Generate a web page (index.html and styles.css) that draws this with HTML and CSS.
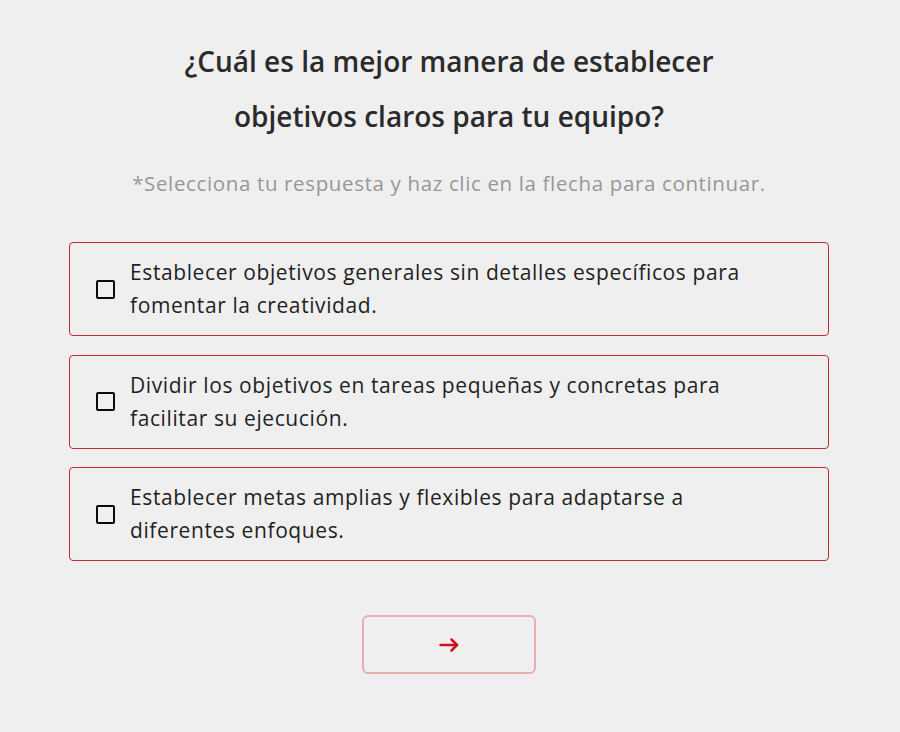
FILE: index.html
```html
<!DOCTYPE html>
<html lang="es">
<head>
<meta charset="utf-8">
<link rel="stylesheet" href="styles.css">
</head>
<body>
<main class="quiz">
  <h1 class="question">¿Cuál es la mejor manera de establecer<br>objetivos claros para tu equipo?</h1>
  <p class="hint">*Selecciona tu respuesta y haz clic en la flecha para continuar.</p>
  <div class="options">
    <label class="option"><span class="box"></span><span class="text">Establecer objetivos generales sin detalles específicos para fomentar la creatividad.</span></label>
    <label class="option"><span class="box"></span><span class="text">Dividir los objetivos en tareas pequeñas y concretas para facilitar su ejecución.</span></label>
    <label class="option"><span class="box"></span><span class="text">Establecer metas amplias y flexibles para adaptarse a diferentes enfoques.</span></label>
  </div>
  <div class="actions">
    <button class="next" type="button" aria-label="Continuar">
      <svg class="arrow" width="20" height="14" viewBox="0 0 20 14" fill="none" stroke="currentColor" stroke-width="2.5" stroke-linecap="round" stroke-linejoin="round">
        <path d="M1.5 7H18"/>
        <path d="M12.5 1.5L18 7L12.5 12.5"/>
      </svg>
    </button>
  </div>
</main>
</body>
</html>
```
FILE: styles.css
```css
* { box-sizing: border-box; }
html, body { margin: 0; padding: 0; }
body {
  background: #efefef;
  font-family: "Open Sans", "Noto Sans", sans-serif;
  color: #222;
  width: 900px;
  height: 732px;
  overflow: hidden;
}
.quiz {
  width: 760px;
  margin-left: 69px;
  padding-top: 34px;
}
.question {
  margin: 0;
  text-align: center;
  font-size: 28px;
  font-weight: 600;
  line-height: 55px;
  color: #2b2b2b;
}
.hint {
  margin: 24px 0 0;
  text-align: center;
  font-size: 20.5px;
  letter-spacing: 0.64px;
  line-height: 30px;
  color: #979797;
}
.options {
  margin-top: 44px;
  display: flex;
  flex-direction: column;
  gap: 18.5px;
}
.option {
  display: flex;
  align-items: center;
  gap: 15px;
  border: 1px solid #c62630;
  border-radius: 4px;
  padding: 13px 58px 13px 26px;
}
.box {
  flex: none;
  width: 19px;
  height: 19px;
  border: 2px solid #0a0a0a;
  border-radius: 2px;
}
.text {
  font-size: 21px;
  letter-spacing: 0.6px;
  line-height: 33px;
  color: #1f1f1f;
}
.actions {
  margin-top: 54px;
  display: flex;
  justify-content: center;
}
.next {
  width: 174px;
  height: 59px;
  background: transparent;
  border: 2px solid #e6b0b2;
  border-radius: 6px;
  color: #cc1020;
  padding: 0;
  display: flex;
  align-items: center;
  justify-content: center;
}
.arrow {
  display: block;
}
```
